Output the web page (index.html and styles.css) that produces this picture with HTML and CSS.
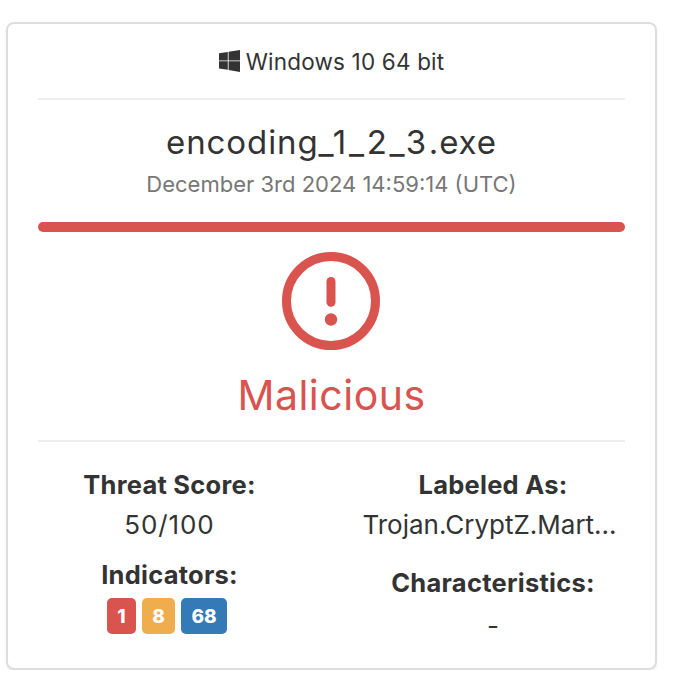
FILE: index.html
```
<!DOCTYPE html>
<html lang="en">
<head>
<meta charset="utf-8">
<title>Threat report</title>
<link rel="stylesheet" href="styles.css">
</head>
<body>
<article class="card">
  <header class="platform">
    <svg class="windows" viewBox="0 0 21 22" aria-hidden="true"><path d="M0 3.2 8.8 2v8.5H0zM9.6 1.8 21 0v10.5H9.6zM0 11.3h8.8v8.5L0 18.5zM9.6 11.3H21V22L9.6 20z"/></svg>
    <span class="os">Windows 10 64 bit</span>
  </header>
  <h1 class="filename">encoding<span class="sequence">_1_2_3</span>.exe</h1>
  <time class="date">December 3rd 2024 14:59:14 (UTC)</time>
  <div class="bar"></div>
  <svg class="alert" viewBox="0 0 98 98" aria-hidden="true"><circle cx="49" cy="49" r="44.5"/><path d="M49 29.5v20.7"/><circle class="dot" cx="49" cy="67.5" r="6.2"/></svg>
  <p class="verdict">Malicious</p>
  <section class="details">
    <div class="column left">
      <h2>Threat Score:</h2>
      <p class="score">50/100</p>
      <h2 class="second">Indicators:</h2>
      <div class="badges"><b class="badge red">1</b><b class="badge orange">8</b><b class="badge blue">68</b></div>
    </div>
    <div class="column right">
      <h2>Labeled As:</h2>
      <p class="label">Trojan.CryptZ.Mart...</p>
      <h2 class="second">Characteristics:</h2>
      <p class="none">-</p>
    </div>
  </section>
</article>
</body>
</html>
```
FILE: styles.css
```
* { box-sizing: border-box; }
body { margin: 0; background: #fff; color: #333; font-family: Inter, "Liberation Sans", sans-serif; }
h1, h2, p { margin: 0; font-weight: 400; }
.card {
  width: 651px; height: 648px; margin: 22px 0 0 6px; padding: 0 30px;
  border: 2px solid #ddd; border-radius: 8px; box-shadow: 0 2px 3px rgba(0, 0, 0, .06);
  display: flex; flex-direction: column; text-align: center; white-space: nowrap;
}
.platform {
  height: 76px; flex: none; padding-top: 1px; border-bottom: 2px solid #eee;
  display: flex; align-items: center; justify-content: center; gap: 6px;
  font-size: 22.5px;
}
.windows { width: 21px; height: 22px; fill: #333; margin-top: -2px; }
.os { letter-spacing: .18px; }
.filename { margin-top: 22px; font-size: 33px; line-height: 40px; letter-spacing: .9px; }
.sequence { letter-spacing: 2.7px; }
.date { font-size: 22px; line-height: 44px; color: #777; }
.bar { height: 10px; flex: none; margin-top: 16px; border-radius: 5px; background: #d9534f; }
.alert { width: 98px; height: 98px; flex: none; margin: 20px 0 0 244px; fill: none; stroke: #d9534f; stroke-width: 9; stroke-linecap: round; }
.alert .dot { fill: #d9534f; stroke: none; }
.verdict { height: 90px; line-height: 90px; font-size: 41px; letter-spacing: .5px; color: #d9534f; }
.details { display: grid; grid-template-columns: 263px 264px; justify-content: space-between; border-top: 2px solid #eee; padding-top: 23px; }
.column { font-size: 26px; line-height: 40px; }
.column h2 { font-size: 25.5px; font-weight: 700; letter-spacing: .25px; }
.score { letter-spacing: .9px; }
.label { padding-right: 7px; }
.none { padding-top: 3px; }
.left .second { margin-top: 10px; }
.right .second { margin-top: 18px; }
.badges { display: flex; gap: 6px; margin: 3px 0 0 69px; }
.badge { height: 36px; border-radius: 5px; color: #fff; font-size: 19px; line-height: 38px; font-weight: 800; }
.red { width: 29px; background: #d9534f; }
.orange { width: 33px; background: #f0ad4e; }
.blue { width: 46px; background: #337ab7; }
```
